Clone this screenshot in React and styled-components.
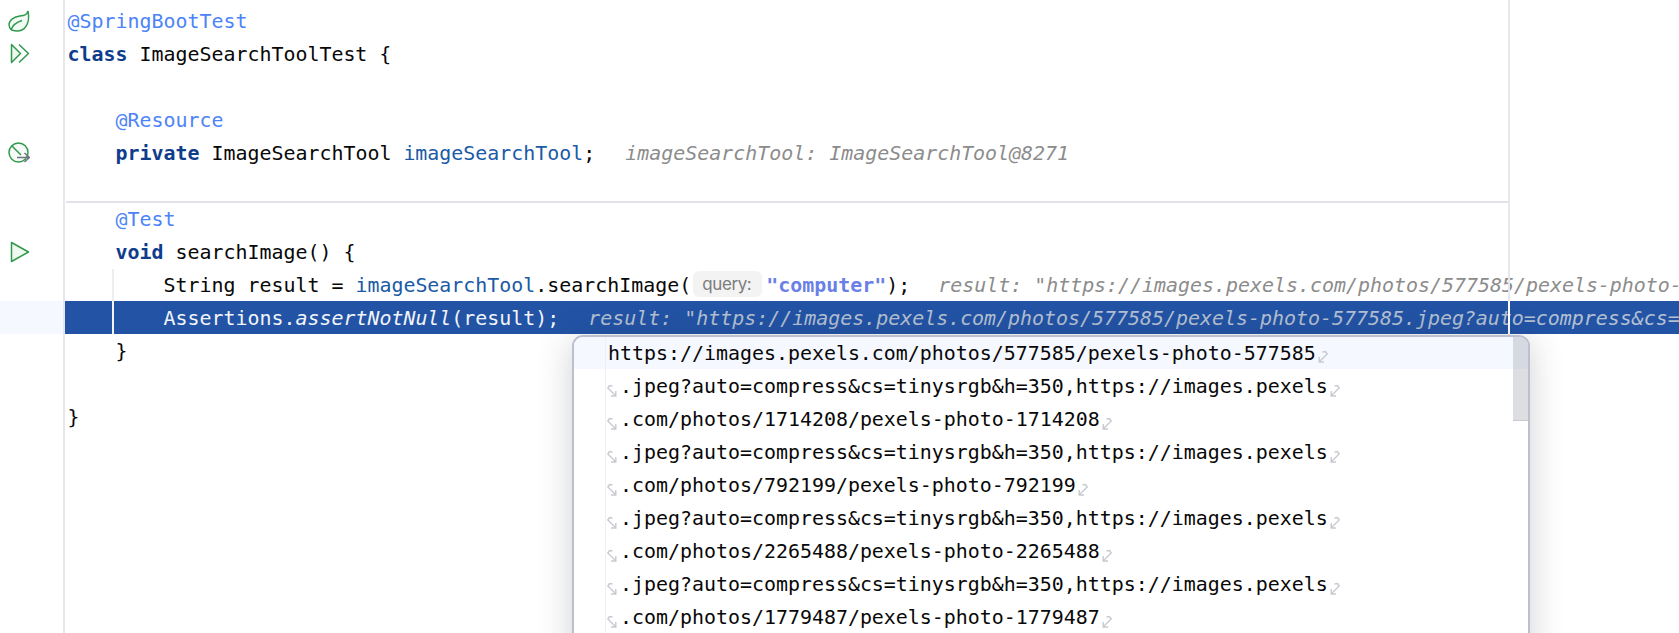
import React from 'react';
import styled, { createGlobalStyle } from 'styled-components';

const GlobalStyle = createGlobalStyle`
    html, body {
        margin: 0;
        padding: 0;
        background: #ffffff;
        overflow: hidden;
    }
`;

const MONO = `"DejaVu Sans Mono", "Liberation Mono", monospace`;

const colors = {
    plain: '#080808',
    keyword: '#0f3d8c',
    annotation: '#4c84f7',
    field: '#1b5aa6',
    string: '#6a80e6',
    hint: '#8c8c8c',
    selectedHint: '#b4c0d2',
    selectedText: '#f2f5fa',
};

const Editor = styled.div`
    position: relative;
    width: 1679px;
    height: 633px;
    overflow: hidden;
    background: #fff;
    font-family: ${MONO};
    font-size: 19.93px;
    white-space: pre;
`;

const Row = styled.div`
    display: flex;
    height: ${({ $height }) => $height || 33}px;
    line-height: 36px;
`;

const GutterCell = styled.div`
    flex: none;
    width: 65px;
    display: flex;
    align-items: center;
    padding-left: 8px;
    box-sizing: border-box;
    border-right: 2px solid #e6e6ec;
    background: ${({ $selected }) => ($selected ? '#f5f8fe' : 'transparent')};
`;

const Code = styled.div`
    position: relative;
    flex: 1;
    min-width: 0;
    padding-left: ${({ $indent }) => 2.5 + $indent * 48}px;
    color: ${({ $selected }) => ($selected ? colors.selectedText : colors.plain)};
    background: ${({ $selected }) => ($selected ? '#2253a5' : 'transparent')};
    overflow: hidden;
`;

const Token = styled.span`
    color: ${({ $kind }) => colors[$kind] || 'inherit'};
    font-weight: ${({ $kind }) => ($kind === 'keyword' || $kind === 'string' ? 700 : 400)};
`;

const Italic = styled.span`
    font-style: italic;
`;

const Hint = styled.span`
    font-style: italic;
    margin-left: ${({ $gap }) => $gap}px;
    color: ${({ $selected }) => ($selected ? colors.selectedHint : colors.hint)};
`;

const ParamPill = styled.span`
    display: inline-block;
    width: 69px;
    height: 26px;
    margin: 0 4px 0 2px;
    padding-left: 9px;
    box-sizing: border-box;
    vertical-align: middle;
    position: relative;
    top: -3px;
    background: #f3f3f4;
    border-radius: 6px;
    font-family: Inter, "Noto Sans", sans-serif;
    font-size: 17px;
    line-height: 26px;
    letter-spacing: -0.4px;
    color: #7d7d7d;
`;

const Separator = styled.div`
    position: absolute;
    left: 66px;
    top: 201px;
    width: 1442px;
    height: 2px;
    background: #e2e2e8;
`;

const MarginLine = styled.div`
    position: absolute;
    left: 1508px;
    top: 0;
    bottom: 0;
    width: 2px;
    background: ${({ $onSelection }) => ($onSelection ? '#ffffff' : '#e8e8ec')};
    ${({ $onSelection }) => $onSelection && 'top: 301px; bottom: auto; height: 33px;'}
`;

const IndentGuide = styled.div`
    position: absolute;
    left: 112px;
    top: ${({ $onSelection }) => ($onSelection ? 301 : 269)}px;
    width: 2px;
    height: ${({ $onSelection }) => ($onSelection ? 33 : 32)}px;
    background: ${({ $onSelection }) => ($onSelection ? '#f2f4f8' : '#eeeef2')};
`;

const Popup = styled.div`
    position: absolute;
    left: 572px;
    top: 335px;
    width: 958px;
    height: 330px;
    box-sizing: border-box;
    background: #fff;
    border: 2px solid #bcbfce;
    border-radius: 11px;
    box-shadow: 0 4px 34px rgba(40, 45, 70, 0.22);
    overflow: hidden;
`;

const PopupGutterLine = styled.div`
    position: absolute;
    left: 31px;
    top: 0;
    bottom: 0;
    width: 1px;
    background: #f0f0f4;
`;

const PopupRow = styled.div`
    display: flex;
    align-items: center;
    height: ${({ $first }) => ($first ? '32px' : '33px')};
    line-height: 33px;
    margin-bottom: ${({ $first }) => ($first ? '1px' : '0')};
    padding-left: ${({ $first }) => ($first ? '34px' : '32px')};
    background: ${({ $first }) => ($first ? '#f5f8fe' : 'transparent')};
    color: ${colors.plain};
`;

const Scrollbar = styled.div`
    position: absolute;
    right: 0;
    top: 0;
    width: 15px;
    height: 83px;
    background: rgba(120, 125, 140, 0.25);
    border-bottom: 1px solid rgba(120, 125, 140, 0.2);
`;

const WrapSvg = styled.svg`
    flex: none;
    width: 12px;
    height: 14px;
    position: relative;
    top: 4px;
    margin: ${({ $start }) => ($start ? '0 2px 0 0' : '0 0 0 1px')};
`;

const WrapStart = () => (
    <WrapSvg $start viewBox="0 0 12 14" fill="none" stroke="#c8cad2" strokeWidth="1.4">
        <path d="M6.5 2 L3.5 1.5 L1.8 4 L9.5 11.5 M9.8 7 V12 H5" />
    </WrapSvg>
);

const WrapEnd = () => (
    <WrapSvg viewBox="0 0 12 14" fill="none" stroke="#c8cad2" strokeWidth="1.4">
        <path d="M5.5 2 L8.5 1.5 L10.2 4 L2.5 11.5 M2.2 7 V12 H7" />
    </WrapSvg>
);

const LeafIcon = () => (
    <svg width="22" height="22" viewBox="0 0 22 22" fill="none" stroke="#2f9a4e" strokeWidth="1.4">
        <path d="M20 1 C19 5 16 5.5 12 6 C6 6.8 1 10 1 15 C1 17 2.5 19 3.5 20 C8 21.5 14 21.5 17.5 17 C20.5 13 21 6 20 1 Z" fill="#f2faf4" />
        <path d="M3 20 C5 14 9 12 14 10.5" />
    </svg>
);

const RunAllIcon = () => (
    <svg width="20" height="21" viewBox="0 0 20 21" fill="none" stroke="#2f9a4e" strokeWidth="1.5" strokeLinejoin="round" style={{ marginLeft: 2 }}>
        <path d="M1.5 1.5 L10.5 10.5 L1.5 19.5 Z" fill="#eef8f0" />
        <path d="M9 1.5 L18.5 10.5 L9 19.5" />
    </svg>
);

const RunIcon = () => (
    <svg width="20" height="22" viewBox="0 0 20 22" fill="#eef8f0" stroke="#2f9a4e" strokeWidth="1.5" strokeLinejoin="round" style={{ marginLeft: 2 }}>
        <path d="M1.5 1.5 L18.5 11 L1.5 20.5 Z" />
    </svg>
);

const BeanIcon = () => (
    <svg width="22" height="22" viewBox="0 0 22 22" fill="none" strokeWidth="1.5">
        <circle cx="10.5" cy="10.5" r="9.5" stroke="#2f9a4e" fill="#f6fbf7" />
        <path d="M4 4 L13 13" stroke="#2f9a4e" />
        <path d="M9 15.5 H21 M16.5 11 L21.5 15.5 L16.5 20" stroke="#6f7180" />
    </svg>
);

const longValue = 'result: "https://images.pexels.com/photos/577585/pexels-photo-577585.jpeg?auto=compress&cs=tinysrgb&h=350"';

const popupLines = [
    '.jpeg?auto=compress&cs=tinysrgb&h=350,https://images.pexels',
    '.com/photos/1714208/pexels-photo-1714208',
    '.jpeg?auto=compress&cs=tinysrgb&h=350,https://images.pexels',
    '.com/photos/792199/pexels-photo-792199',
    '.jpeg?auto=compress&cs=tinysrgb&h=350,https://images.pexels',
    '.com/photos/2265488/pexels-photo-2265488',
    '.jpeg?auto=compress&cs=tinysrgb&h=350,https://images.pexels',
    '.com/photos/1779487/pexels-photo-1779487',
];

function Line({ icon, indent = 0, selected, height, children }) {
    return (
        <Row $height={height}>
            <GutterCell $selected={selected}>{icon}</GutterCell>
            <Code $indent={indent} $selected={selected}>{children}</Code>
        </Row>
    );
}

export default function App() {
    return (
        <Editor>
            <GlobalStyle />
            <Line height={4} />
            <Line icon={<LeafIcon />}><Token $kind="annotation">@SpringBootTest</Token></Line>
            <Line icon={<RunAllIcon />}><Token $kind="keyword">class</Token> ImageSearchToolTest {'{'}</Line>
            <Line />
            <Line indent={1}><Token $kind="annotation">@Resource</Token></Line>
            <Line indent={1} icon={<BeanIcon />}>
                <Token $kind="keyword">private</Token> ImageSearchTool <Token $kind="field">imageSearchTool</Token>;
                <Hint $gap={30}>imageSearchTool: ImageSearchTool@8271</Hint>
            </Line>
            <Line />
            <Line indent={1}><Token $kind="annotation">@Test</Token></Line>
            <Line indent={1} icon={<RunIcon />}><Token $kind="keyword">void</Token> searchImage() {'{'}</Line>
            <Line indent={2}>
                String result = <Token $kind="field">imageSearchTool</Token>.searchImage(
                <ParamPill>query:</ParamPill>
                <Token $kind="string">"computer"</Token>);
                <Hint $gap={28}>{longValue}</Hint>
            </Line>
            <Line indent={2} selected>
                Assertions.<Italic>assertNotNull</Italic>(result);
                <Hint $gap={29} $selected>{longValue}</Hint>
            </Line>
            <Line indent={1}>{'}'}</Line>
            <Line />
            <Line>{'}'}</Line>
            <Line height={200} />

            <Separator />
            <MarginLine />
            <MarginLine $onSelection />
            <IndentGuide />
            <IndentGuide $onSelection />

            <Popup>
                <PopupRow $first>
                    https://images.pexels.com/photos/577585/pexels-photo-577585
                    <WrapEnd />
                </PopupRow>
                {popupLines.map((text, i) => (
                    <PopupRow key={i}>
                        <WrapStart />
                        {text}
                        <WrapEnd />
                    </PopupRow>
                ))}
                <PopupGutterLine />
                <Scrollbar />
            </Popup>
        </Editor>
    );
}
